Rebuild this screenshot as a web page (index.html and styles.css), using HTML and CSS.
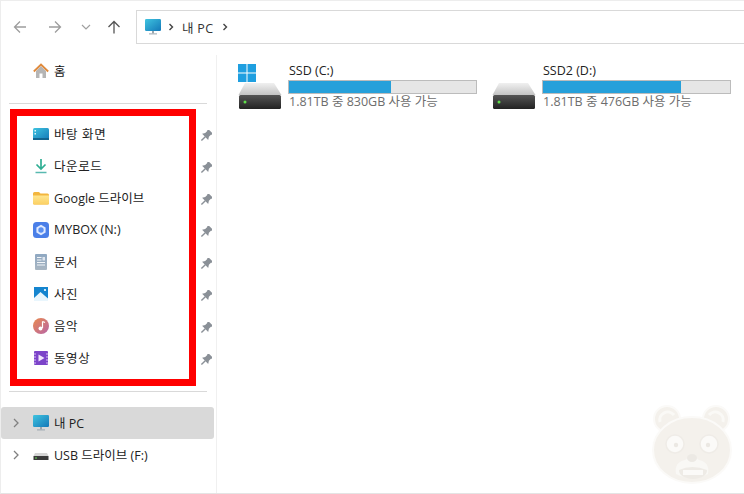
FILE: index.html
```html
<!DOCTYPE html>
<html lang="ko">
<head>
  <meta charset="UTF-8">
  <title>내 PC</title>
  <link rel="stylesheet" href="styles.css">
</head>
<body>
  <svg class="defs" width="0" height="0">
    <defs>
      <linearGradient id="screenGrad" x1="0" y1="0" x2="1" y2="1"><stop offset="0" stop-color="#3fc4e0"/><stop offset="1" stop-color="#1478b8"/></linearGradient>
      <linearGradient id="diskGrad" x1="0" y1="0" x2="0" y2="1"><stop offset="0" stop-color="#555"/><stop offset="1" stop-color="#222"/></linearGradient>
      <linearGradient id="topGrad" x1="0" y1="0" x2="0" y2="1"><stop offset="0" stop-color="#f0f0f0"/><stop offset="1" stop-color="#c4c4c4"/></linearGradient>
      <linearGradient id="folderGrad" x1="0" y1="0" x2="0" y2="1"><stop offset="0" stop-color="#ffe68f"/><stop offset="1" stop-color="#fbd063"/></linearGradient>
      <linearGradient id="musicGrad" x1="0" y1="0" x2="1" y2="1"><stop offset="0" stop-color="#ea8a4c"/><stop offset="1" stop-color="#b765a8"/></linearGradient>
      <linearGradient id="docGrad" x1="0" y1="0" x2="0" y2="1"><stop offset="0" stop-color="#8fa8c2"/><stop offset="1" stop-color="#a9b6c2"/></linearGradient>
      <symbol id="pin" viewBox="0 0 12 12">
        <g transform="rotate(45 6 6)" fill="#8a9097">
          <path d="M2.800 -.5H9.200V1.300H8.600V4.500L10.300 7.200H1.700L3.400 4.500V1.300H2.800Z"/>
          <rect x="5.300" y="7" width="1.400" height="5.500"/>
        </g>
      </symbol>
      <symbol id="monitor" viewBox="0 0 16 16">
        <rect x="0" y="0" width="16" height="12" rx="1.200" fill="url(#screenGrad)"/>
        <rect x="7" y="12" width="2" height="2.400" fill="#9aa6ae"/>
        <rect x="4" y="14.400" width="8" height="1" fill="#9aa6ae"/>
      </symbol>
      <symbol id="disk" viewBox="0 0 44 26">
        <path d="M7 0H36L43.500 12H.5Z" fill="url(#topGrad)"/>
        <rect x="1" y="12" width="42" height="14" rx="1.500" fill="url(#diskGrad)"/>
        <circle cx="7" cy="19" r="1.500" fill="#5fe04a"/>
      </symbol>
    </defs>
  </svg>

  <div class="window">
    <header class="toolbar">
      <div class="nav-btns">
        <svg class="nav-ico" viewBox="0 0 14 14"><path d="M13 7H1.500M7 1.500 1.500 7 7 12.500" fill="none" stroke="#9d9d9d" stroke-width="1.300"/></svg>
        <svg class="nav-ico" viewBox="0 0 14 14"><path d="M1 7H12.500M7 1.500 12.500 7 7 12.500" fill="none" stroke="#9d9d9d" stroke-width="1.300"/></svg>
        <svg class="nav-ico small" viewBox="0 0 10 6"><path d="M1 1 5 5 9 1" fill="none" stroke="#a0a0a0" stroke-width="1.200"/></svg>
        <svg class="nav-ico" viewBox="0 0 14 14"><path d="M7 13.500V1.500M1.500 7 7 1.500 12.500 7" fill="none" stroke="#555" stroke-width="1.300"/></svg>
      </div>
      <div class="address">
        <svg class="ico" viewBox="0 0 16 16"><use href="#monitor"/></svg>
        <svg class="crumb" viewBox="0 0 6 8"><path d="M1.500 1 4.500 4 1.500 7" fill="none" stroke="#444" stroke-width="1.400"/></svg>
        <span class="crumb-text">내 PC</span>
        <svg class="crumb" viewBox="0 0 6 8"><path d="M1.500 1 4.500 4 1.500 7" fill="none" stroke="#444" stroke-width="1.400"/></svg>
      </div>
    </header>

    <div class="main">
      <nav class="sidebar">
        <div class="row">
          <svg class="ico" viewBox="0 0 16 16">
            <path d="M3 8V15H6.500V10.500H9.500V15H13V8L8 3Z" fill="#b5b5b5"/>
            <path d="M.8 8.500 8 1.500 15.200 8.500" fill="none" stroke="#e08a3c" stroke-width="1.800"/>
          </svg>
          <span class="label ko home-label">홈</span>
        </div>
        <hr class="sep">
        <div class="quick">
          <div class="row">
            <svg class="ico" viewBox="0 0 16 16"><rect y="2" width="16" height="12" rx="1.500" fill="url(#screenGrad)"/><rect y="12" width="16" height="2" fill="#12648f"/><rect x="1.500" y="4" width="1.500" height="1.500" fill="#dff6fb"/><rect x="1.500" y="7" width="1.500" height="1.500" fill="#dff6fb"/></svg>
            <span class="label ko">바탕 화면</span>
            <svg class="pin" viewBox="0 0 12 12"><use href="#pin"/></svg>
          </div>
          <div class="row">
            <svg class="ico" viewBox="0 0 16 16"><path d="M8 1V10.500M3.500 6.500 8 11 12.500 6.500" fill="none" stroke="#2fae93" stroke-width="1.700"/><path d="M2.500 14.500H13.500" stroke="#58b9b0" stroke-width="1.500"/></svg>
            <span class="label ko">다운로드</span>
            <svg class="pin" viewBox="0 0 12 12"><use href="#pin"/></svg>
          </div>
          <div class="row">
            <svg class="ico" viewBox="0 0 16 16"><path d="M0 3.500Q0 2 1.500 2H6L7.500 3.500H14.500Q16 3.500 16 5V13Q16 14.500 14.500 14.500H1.500Q0 14.500 0 13Z" fill="#f3b63e"/><path d="M0 5.500H16V13Q16 14.500 14.500 14.500H1.500Q0 14.500 0 13Z" fill="url(#folderGrad)"/></svg>
            <span class="label">Google 드라이브</span>
            <svg class="pin" viewBox="0 0 12 12"><use href="#pin"/></svg>
          </div>
          <div class="row">
            <svg class="ico" viewBox="0 0 16 16"><rect width="16" height="16" rx="3.500" fill="#4a7fe8"/><path d="M8 2.800 12.600 5.400V10.600L8 13.200 3.400 10.600V5.400Z" fill="#dfeaff"/><circle cx="8" cy="8" r="2.700" fill="#5a8ff0"/></svg>
            <span class="label">MYBOX (N:)</span>
            <svg class="pin" viewBox="0 0 12 12"><use href="#pin"/></svg>
          </div>
          <div class="row">
            <svg class="ico" viewBox="0 0 16 16"><rect x="2" y="0" width="12" height="16" rx="1" fill="url(#docGrad)"/><path d="M4 3.500H8.500M4 6H8.500M4 8.500H12M4 11H12" stroke="#f2f5f8" stroke-width="1"/><rect x="9.500" y="3" width="2.500" height="3.500" fill="#dfe6ee"/></svg>
            <span class="label ko">문서</span>
            <svg class="pin" viewBox="0 0 12 12"><use href="#pin"/></svg>
          </div>
          <div class="row">
            <svg class="ico" viewBox="0 0 16 16"><rect x="1" y="1" width="14" height="14" fill="#1585cf"/><path d="M1 15V12L7.500 6 15 12.500V15Z" fill="#e9f6fd"/><circle cx="12" cy="4" r="1.100" fill="#fff"/></svg>
            <span class="label ko">사진</span>
            <svg class="pin" viewBox="0 0 12 12"><use href="#pin"/></svg>
          </div>
          <div class="row">
            <svg class="ico" viewBox="0 0 16 16"><circle cx="8" cy="8" r="8" fill="url(#musicGrad)"/><path d="M9.500 3.500V10" stroke="#fff" stroke-width="1.200"/><path d="M9.500 3.500 12 4.500" stroke="#fff" stroke-width="1.200"/><circle cx="7.500" cy="10.500" r="2" fill="#fff"/></svg>
            <span class="label ko">음악</span>
            <svg class="pin" viewBox="0 0 12 12"><use href="#pin"/></svg>
          </div>
          <div class="row">
            <svg class="ico" viewBox="0 0 16 16"><rect x="1" y="1" width="14" height="14" rx="1" fill="#7c44c9"/><path d="M1 4H3M1 7H3M1 10H3M1 13H3M13 4H15M13 7H15M13 10H15M13 13H15" stroke="#d9c2f5" stroke-width="1"/><path d="M5.500 4.500 11.500 8 5.500 11.500Z" fill="#efe4fc"/></svg>
            <span class="label ko">동영상</span>
            <svg class="pin" viewBox="0 0 12 12"><use href="#pin"/></svg>
          </div>
          <div class="highlight"></div>
        </div>
        <hr class="sep sep-low">
        <div class="row tree selected">
          <svg class="chev" viewBox="0 0 6 10"><path d="M1 1 5 5 1 9" fill="none" stroke="#808080" stroke-width="1.300"/></svg>
          <svg class="ico" viewBox="0 0 16 16"><use href="#monitor"/></svg>
          <span class="label">내 PC</span>
        </div>
        <div class="row tree">
          <svg class="chev" viewBox="0 0 6 10"><path d="M1 1 5 5 1 9" fill="none" stroke="#808080" stroke-width="1.300"/></svg>
          <svg class="ico" viewBox="0 0 16 16"><path d="M2 6H14L15.500 9H.5Z" fill="#d5d5d5"/><rect x=".5" y="9" width="15" height="4" fill="#3a3a3a"/><rect x="2" y="10.500" width="2" height="1" fill="#6ee05a"/></svg>
          <span class="label">USB 드라이브 (F:)</span>
        </div>
      </nav>

      <section class="content">
        <div class="drive">
          <div class="drive-icon">
            <svg class="win-logo" viewBox="0 0 18 18"><path d="M0 0H8.500V8.500H0ZM9.500 0H18V8.500H9.500ZM0 9.500H8.500V18H0ZM9.500 9.500H18V18H9.500Z" fill="#1f9fe0"/></svg>
            <svg class="disk" viewBox="0 0 44 26"><use href="#disk"/></svg>
          </div>
          <div class="drive-info">
            <div class="drive-name">SSD (C:)</div>
            <div class="meter"><div class="meter-fill" style="width:54.500%"></div></div>
            <div class="drive-free">1.81TB 중 830GB 사용 가능</div>
          </div>
        </div>
        <div class="drive">
          <div class="drive-icon">
            <svg class="disk" viewBox="0 0 44 26"><use href="#disk"/></svg>
          </div>
          <div class="drive-info">
            <div class="drive-name">SSD2 (D:)</div>
            <div class="meter"><div class="meter-fill" style="width:73.600%"></div></div>
            <div class="drive-free">1.81TB 중 476GB 사용 가능</div>
          </div>
        </div>

        <svg class="bear" viewBox="0 0 84 82">
          <g fill="#f4f1ec" stroke="#fbfaf8" stroke-width="2">
            <circle cx="16" cy="15" r="13"/>
            <circle cx="65" cy="15" r="13"/>
            <ellipse cx="41" cy="46" rx="39" ry="33"/>
          </g>
          <path d="M9 18a8 8 0 0 1 14-7M72 18a8 8 0 0 0-14-7" fill="none" stroke="#faf9f6" stroke-width="3"/>
          <circle cx="24" cy="40" r="9" fill="#fbfaf8" stroke="#efece7" stroke-width="1.500"/>
          <circle cx="58" cy="40" r="9" fill="#fbfaf8" stroke="#efece7" stroke-width="1.500"/>
          <circle cx="25" cy="41" r="2.200" fill="#ebe8e3"/>
          <circle cx="57" cy="41" r="2.200" fill="#ebe8e3"/>
          <path d="M25 70Q23 58 34 56L41 50 48 56Q59 58 57 70Q41 78 25 70Z" fill="#f9f8f5"/>
          <ellipse cx="41" cy="54" rx="5" ry="4" fill="#ece9e4"/>
          <path d="M28 66Q41 60 56 66Q56 74 42 75Q28 74 28 66Z" fill="#eeebe6"/>
          <path d="M32 66H52V71H32Z" fill="#fbfaf8"/>
        </svg>
      </section>
    </div>
  </div>
</body>
</html>
```

FILE: styles.css
```css
* {
  box-sizing: border-box;
}

html, body {
  margin: 0;
  height: 100%;
  overflow: hidden;
}

body {
  font-family: "Open Sans", "Noto Sans CJK KR", sans-serif;
  font-size: 12.5px;
  color: #222;
  background: #fff;
}

.defs {
  position: absolute;
}

.window {
  height: 494px;
  display: flex;
  flex-direction: column;
  border-top: 1px solid #ededed;
  border-left: 1px solid #ededed;
  border-bottom: 1px solid #e4e4e4;
}

/* toolbar */
.toolbar {
  height: 54px;
  flex: none;
  display: flex;
  align-items: flex-start;
  padding-top: 9px;
}

.nav-btns {
  width: 135px;
  height: 34px;
  display: flex;
  align-items: center;
  padding-left: 12px;
}

.nav-ico {
  width: 14px;
  height: 14px;
  flex: none;
  margin-right: 21px;
}

.nav-ico.small {
  width: 10px;
  height: 6px;
  margin-right: 16px;
  margin-left: -2px;
}

.address {
  flex: 1;
  height: 34px;
  display: flex;
  align-items: center;
  padding-left: 8px;
  border: 1px solid #d9d9d9;
  border-right: none;
}

.crumb {
  width: 6px;
  height: 8px;
  margin-left: 2px;
}

.crumb-text {
  margin-left: 8px;
  margin-right: 7px;
  letter-spacing: .3px;
  color: #333;
}

/* sidebar */
.main {
  flex: 1;
  display: flex;
  min-height: 0;
}

.sidebar {
  width: 216px;
  flex: none;
  border-right: 1px solid #f0f0f0;
}

.row {
  height: 32px;
  display: flex;
  align-items: center;
  padding-left: 32px;
  position: relative;
}

.label {
  margin-top: -2px;
}

.ko {
  letter-spacing: .6px;
}

.ico {
  width: 16px;
  height: 16px;
  flex: none;
  margin-right: 5px;
}

.home-label {
  color: #111;
}

.sep {
  margin: 16px 9px 14px 8px;
  border: none;
  border-top: 1px solid #d9d9d9;
}

.sep-low {
  margin-top: 17px;
  margin-bottom: 15px;
}

.quick {
  position: relative;
}

.pin {
  position: absolute;
  left: 199px;
  top: 12px;
  width: 12px;
  height: 12px;
}

.highlight {
  position: absolute;
  left: 9px;
  top: -9px;
  width: 186px;
  height: 277px;
  border: 7px solid #ff0000;
}

.tree {
  width: 213px;
}

.tree .chev {
  position: absolute;
  left: 12px;
  top: 11px;
  width: 6px;
  height: 10px;
}

.selected {
  background: #d9d9d9;
  border-radius: 3px;
}

/* drives */
.content {
  flex: 1;
  display: grid;
  grid-template-columns: 254px 254px;
  align-content: start;
  padding: 8px 0 0 21px;
  position: relative;
}

.drive {
  display: flex;
  gap: 6px;
}

.drive-icon {
  width: 44px;
  height: 48px;
  flex: none;
  position: relative;
}

.win-logo {
  position: absolute;
  left: 0;
  top: 1px;
  width: 18px;
  height: 18px;
}

.disk {
  position: absolute;
  left: 0;
  top: 20px;
  width: 44px;
  height: 26px;
}

.drive-info {
  width: 189px;
}

.drive-name {
  height: 17px;
  line-height: 15px;
  padding-left: 1px;
}

.meter {
  height: 14px;
  border: 1px solid #bcbcbc;
  background: #e6e6e6;
}

.meter-fill {
  height: 100%;
  background: #26a0da;
}

.drive-free {
  margin-top: -1px;
  line-height: 17px;
  padding-left: 1px;
  color: #6d6d6d;
}

.bear {
  position: absolute;
  right: 11px;
  bottom: 7px;
  width: 84px;
  height: 82px;
}
```
